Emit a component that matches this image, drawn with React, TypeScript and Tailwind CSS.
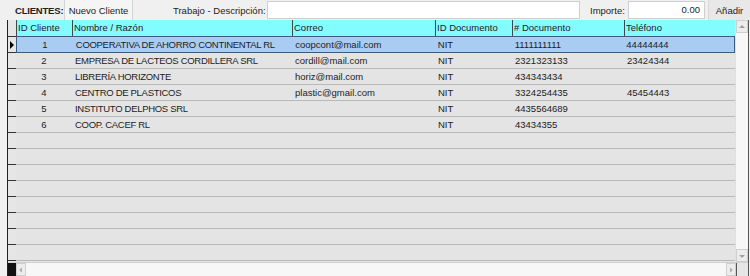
import React from "react";

interface Cliente {
  id: number;
  nombre: string;
  correo: string;
  tipoDoc: string;
  documento: string;
  telefono: string;
}

const clientes: Cliente[] = [
  { id: 1, nombre: "COOPERATIVA DE AHORRO CONTINENTAL RL", correo: "coopcont@mail.com", tipoDoc: "NIT", documento: "1111111111", telefono: "44444444" },
  { id: 2, nombre: "EMPRESA DE LACTEOS CORDILLERA SRL", correo: "cordill@mail.com", tipoDoc: "NIT", documento: "2321323133", telefono: "23424344" },
  { id: 3, nombre: "LIBRERÍA HORIZONTE", correo: "horiz@mail.com", tipoDoc: "NIT", documento: "434343434", telefono: "" },
  { id: 4, nombre: "CENTRO DE PLASTICOS", correo: "plastic@gmail.com", tipoDoc: "NIT", documento: "3324254435", telefono: "45454443" },
  { id: 5, nombre: "INSTITUTO DELPHOS SRL", correo: "", tipoDoc: "NIT", documento: "4435564689", telefono: "" },
  { id: 6, nombre: "COOP. CACEF RL", correo: "", tipoDoc: "NIT", documento: "43434355", telefono: "" },
];

const columns = [
  { title: "ID Cliente", w: "w-[56px]" },
  { title: "Nombre / Razón", w: "w-[220px]" },
  { title: "Correo", w: "w-[143px]" },
  { title: "ID Documento", w: "w-[77px]" },
  { title: "# Documento", w: "w-[112px]" },
  { title: "Teléfono", w: "w-[111px]" },
];

const EMPTY_ROWS = 8;

function Arrow({ dir }: { dir: "up" | "down" | "left" | "right" }) {
  const pts = {
    up: "2,6 5,3 8,6",
    down: "2,4 5,7 8,4",
    left: "6,2 3,5 6,8",
    right: "4,2 7,5 4,8",
  }[dir];
  return (
    <svg width="10" height="10" viewBox="0 0 10 10">
      <polygon points={pts} fill="#a0a0a0" />
    </svg>
  );
}

function Row({ c, selected }: { c?: Cliente; selected?: boolean }) {
  return (
    <div className="flex h-[16px]">
      <div className="w-[8px] border-b border-[#333] bg-[#e6e6e6] flex items-center">
        {selected && (
          <svg width="6" height="8" viewBox="0 0 6 8" className="ml-[1px]">
            <polygon points="1,0 5,4 1,8" fill="#000" />
          </svg>
        )}
      </div>
      <div
        className={
          selected
            ? "flex w-[719px] bg-[#a9cdf2] border border-[#3b5d80] -mt-[1px] h-[17px] leading-[15px]"
            : "flex w-[719px] bg-[#e4e4e4] border-b border-[#b9b9b9] leading-[15px]"
        }
      >
        {c && (
          <>
            <div className="w-[56px] text-center">{c.id}</div>
            <div className="w-[220px] pl-[3px] whitespace-nowrap overflow-hidden tracking-[-0.3px]">{c.nombre}</div>
            <div className="w-[143px] pl-[3px] whitespace-nowrap overflow-hidden">{c.correo}</div>
            <div className="w-[77px] pl-[3px]">{c.tipoDoc}</div>
            <div className="w-[112px] pl-[3px]">{c.documento}</div>
            <div className="w-[111px] pl-[3px]">{c.telefono}</div>
          </>
        )}
      </div>
    </div>
  );
}

export default function App() {
  return (
    <div
      className="w-[750px] h-[276px] bg-[#f0f0f0] text-[9.5px] leading-[15px] text-[#222] overflow-hidden flex flex-col"
      style={{ fontFamily: '"Liberation Sans", Arial, sans-serif' }}
    >
      {/* top toolbar */}
      <div className="h-[20px] flex items-center whitespace-nowrap">
        <span className="ml-[15px] w-[49px] font-bold tracking-[-0.2px]">CLIENTES:</span>
        <button className="h-[20px] w-[69px] bg-[#f5f5f5] border-x border-[#d4d4d4] text-[9.5px]">
          Nuevo Cliente
        </button>
        <span className="ml-[40px] w-[94px]">Trabajo - Descripción:</span>
        <div className="w-[313px] h-[18px] bg-white border border-[#cfcfcf]" />
        <span className="ml-[10px] w-[38px]">Importe:</span>
        <div className="w-[77px] h-[18px] bg-white border border-[#cfcfcf] text-right pr-[4px] leading-[16px]">0.00</div>
        <button className="ml-[3px] h-[20px] flex-1 bg-[#e8e8e8] border-l border-[#d8d8d8] text-[9.5px]">
          Añadir
        </button>
      </div>

      {/* grid */}
      <div className="flex flex-1">
        <div className="w-[7px]" />
        <div className="flex-1 flex flex-col border-l border-[#222] border-r border-r-[#555]">
          <div className="flex flex-1">
            <div className="flex flex-col w-[727px] bg-[#e4e4e4]">
              {/* header */}
              <div className="flex h-[17px]">
                <div className="w-[8px] bg-[#e6e6e6] border-b border-[#333]" />
                <div className="flex w-[719px] bg-[#82fcff] border-b border-[#4a6a6a]">
                  {columns.map((col) => (
                    <div
                      key={col.title}
                      className={`${col.w} border-l border-[#3a4a4a] pl-[1px] whitespace-nowrap leading-[16px]`}
                    >
                      {col.title}
                    </div>
                  ))}
                </div>
              </div>
              {clientes.map((c, i) => (
                <Row key={c.id} c={c} selected={i === 0} />
              ))}
              {Array.from({ length: EMPTY_ROWS }).map((_, i) => (
                <Row key={`e${i}`} />
              ))}
              <div className="flex flex-1">
                <div className="w-[8px] bg-[#e6e6e6]" />
                <div className="flex-1" />
              </div>
            </div>
            {/* vertical scrollbar */}
            <div className="flex-1 flex flex-col bg-[#f7f7f7] border-l border-[#e0e0e0]">
              <div className="h-[13px] flex items-center justify-center bg-[#ececec] border border-[#cfcfcf]">
                <Arrow dir="up" />
              </div>
              <div className="flex-1" />
              <div className="h-[13px] flex items-center justify-center bg-[#ececec] border border-[#cfcfcf]">
                <Arrow dir="down" />
              </div>
            </div>
          </div>
          {/* horizontal scrollbar */}
          <div className="h-[14px] flex bg-[#f7f7f7] border-t border-[#d0d0d0]">
            <div className="w-[8px] bg-[#111]" />
            <div className="w-[10px] flex items-center justify-center bg-[#ececec] border border-[#cfcfcf]">
              <Arrow dir="left" />
            </div>
            <div className="flex-1" />
            <div className="w-[10px] flex items-center justify-center bg-[#ececec] border border-[#cfcfcf]">
              <Arrow dir="right" />
            </div>
            <div className="w-[12px] bg-[#e6e6e6] border-l border-[#555]" />
          </div>
        </div>
        <div className="w-[1px]" />
      </div>
    </div>
  );
}
